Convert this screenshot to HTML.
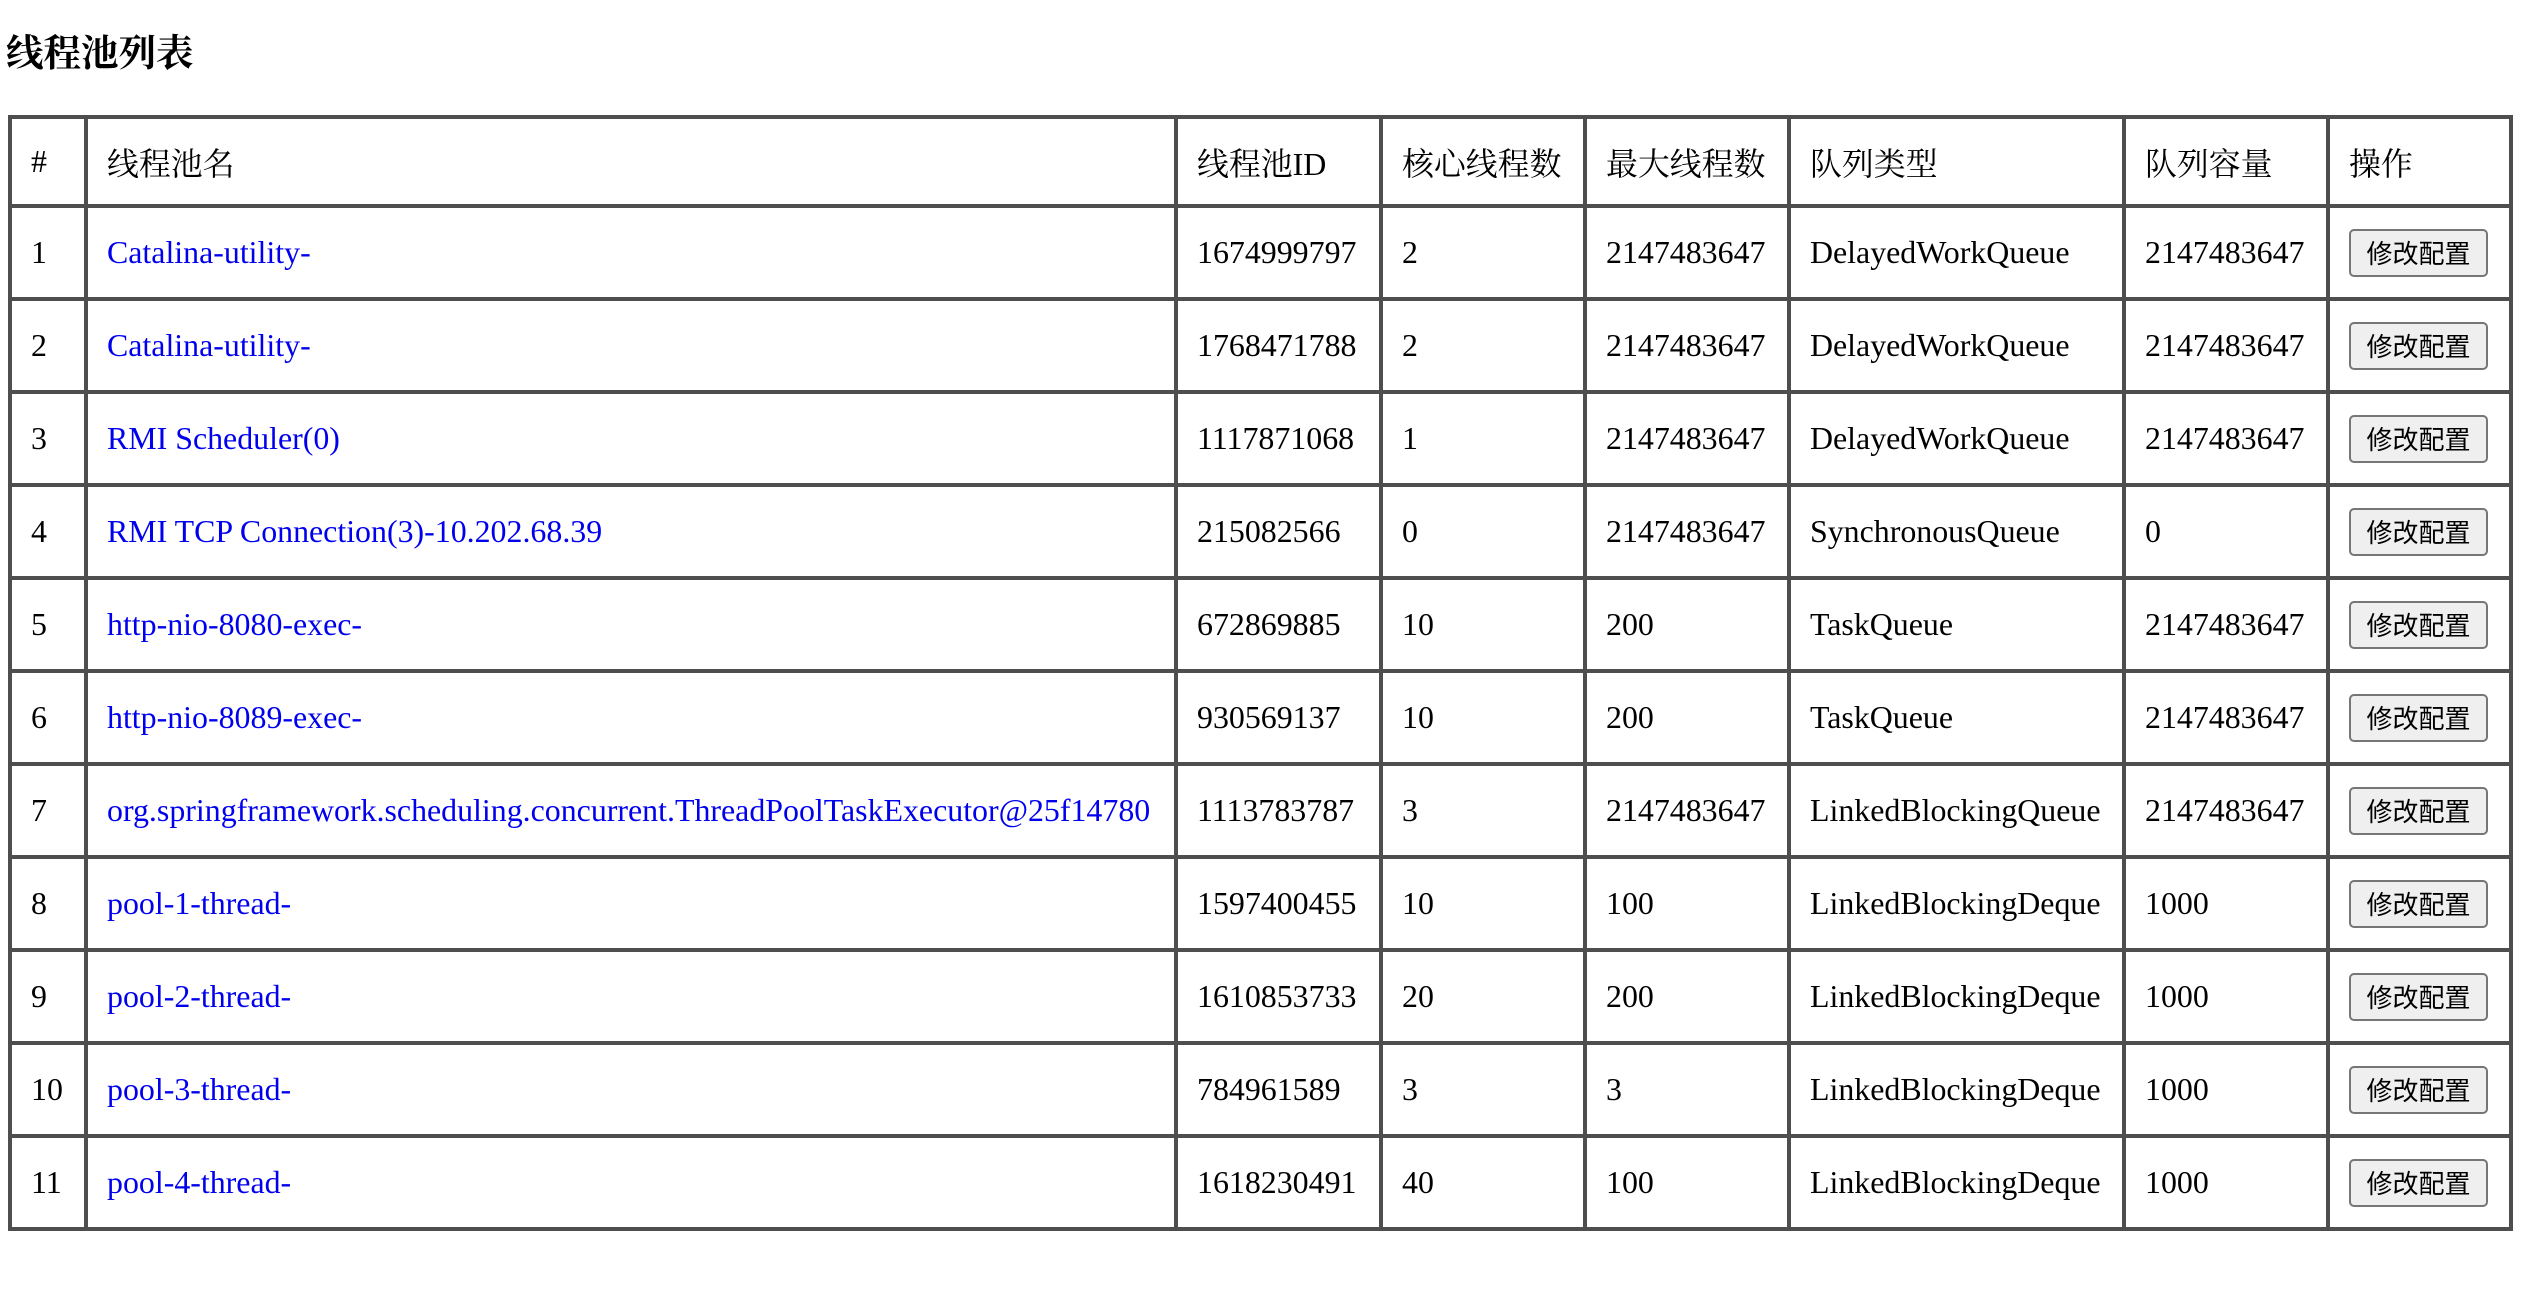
<!DOCTYPE html>
<html><head><meta charset="utf-8">
<style>
html,body{margin:0;padding:0;background:#fff;}
body{width:2544px;height:1316px;position:relative;overflow:hidden;font-family:"Liberation Serif","Noto Serif CJK SC","Noto Sans CJK SC",serif;color:#000;}
h3{position:absolute;left:6px;top:29px;margin:0;font-size:37.5px;font-weight:bold;line-height:52px;}
table{position:absolute;left:8px;top:115px;border-collapse:collapse;table-layout:fixed;width:2501px;font-size:31.9px;}
td,th{border:4px solid #4e4e4e;padding:0 0 0 19px;text-align:left;font-weight:normal;white-space:nowrap;overflow:hidden;}
tr{height:93px;}
tr.h{height:89px;}
a{color:#0000ee;text-decoration:none;}
button{font-family:"Noto Sans CJK SC",sans-serif;font-size:26px;width:139px;height:48px;padding:0;background:#efefef;border:2px solid #767676;border-radius:5px;color:#000;line-height:44px;margin-left:0px;}
</style></head><body>
<h3>线程池列表</h3>
<table>
<colgroup><col style="width:76px"><col style="width:1090px"><col style="width:205px"><col style="width:204px"><col style="width:204px"><col style="width:335px"><col style="width:204px"><col style="width:183px"></colgroup>
<tr class="h"><th>#</th><th>线程池名</th><th>线程池ID</th><th>核心线程数</th><th>最大线程数</th><th>队列类型</th><th>队列容量</th><th>操作</th></tr>
<tr><td>1</td><td><a>Catalina-utility-</a></td><td>1674999797</td><td>2</td><td>2147483647</td><td>DelayedWorkQueue</td><td>2147483647</td><td><button>修改配置</button></td></tr>
<tr><td>2</td><td><a>Catalina-utility-</a></td><td>1768471788</td><td>2</td><td>2147483647</td><td>DelayedWorkQueue</td><td>2147483647</td><td><button>修改配置</button></td></tr>
<tr><td>3</td><td><a>RMI Scheduler(0)</a></td><td>1117871068</td><td>1</td><td>2147483647</td><td>DelayedWorkQueue</td><td>2147483647</td><td><button>修改配置</button></td></tr>
<tr><td>4</td><td><a>RMI TCP Connection(3)-10.202.68.39</a></td><td>215082566</td><td>0</td><td>2147483647</td><td>SynchronousQueue</td><td>0</td><td><button>修改配置</button></td></tr>
<tr><td>5</td><td><a>http-nio-8080-exec-</a></td><td>672869885</td><td>10</td><td>200</td><td>TaskQueue</td><td>2147483647</td><td><button>修改配置</button></td></tr>
<tr><td>6</td><td><a>http-nio-8089-exec-</a></td><td>930569137</td><td>10</td><td>200</td><td>TaskQueue</td><td>2147483647</td><td><button>修改配置</button></td></tr>
<tr><td>7</td><td><a>org.springframework.scheduling.concurrent.ThreadPoolTaskExecutor@25f14780</a></td><td>1113783787</td><td>3</td><td>2147483647</td><td>LinkedBlockingQueue</td><td>2147483647</td><td><button>修改配置</button></td></tr>
<tr><td>8</td><td><a>pool-1-thread-</a></td><td>1597400455</td><td>10</td><td>100</td><td>LinkedBlockingDeque</td><td>1000</td><td><button>修改配置</button></td></tr>
<tr><td>9</td><td><a>pool-2-thread-</a></td><td>1610853733</td><td>20</td><td>200</td><td>LinkedBlockingDeque</td><td>1000</td><td><button>修改配置</button></td></tr>
<tr><td>10</td><td><a>pool-3-thread-</a></td><td>784961589</td><td>3</td><td>3</td><td>LinkedBlockingDeque</td><td>1000</td><td><button>修改配置</button></td></tr>
<tr><td>11</td><td><a>pool-4-thread-</a></td><td>1618230491</td><td>40</td><td>100</td><td>LinkedBlockingDeque</td><td>1000</td><td><button>修改配置</button></td></tr>
</table>
</body></html>
